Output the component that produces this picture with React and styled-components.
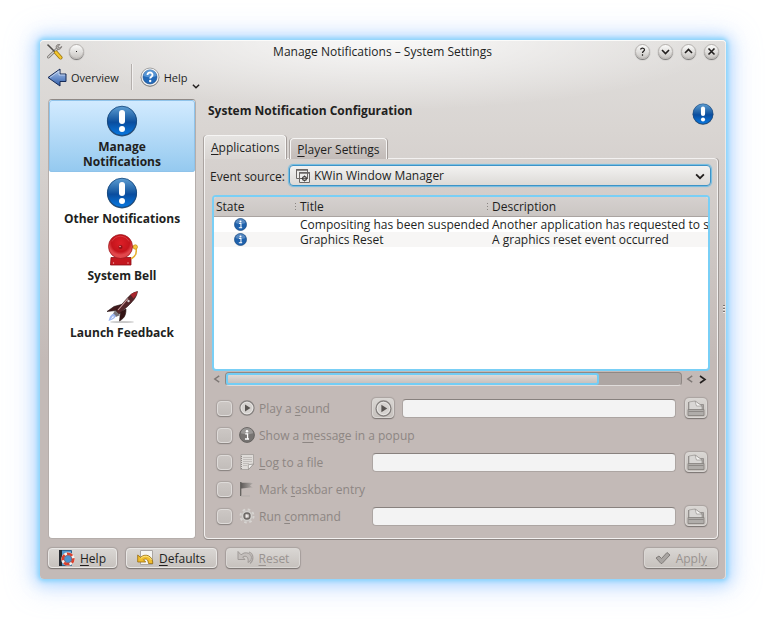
import React from 'react';
import styled, { createGlobalStyle, css } from 'styled-components';

const GlobalStyle = createGlobalStyle`
  * {
    box-sizing: border-box;
  }
  body {
    margin: 0;
    background: #fff;
    color: #221f1e;
    font: 12px/15px "Open Sans", "Noto Sans", sans-serif;
  }
  button, input, select {
    font: inherit;
    color: inherit;
  }
  svg {
    display: block;
    flex: none;
  }
`;

const Desktop = styled.div`
  display: flex;
  min-height: 100vh;
  padding: 40px;
`;

const Window = styled.div`
  position: relative;
  flex: 1;
  min-width: 0;
  display: flex;
  flex-direction: column;
  padding: 0 8px 11px;
  border-radius: 4px;
  background:
    radial-gradient(ellipse 340px 70px at 50% 0, rgba(255, 255, 255, 0.8), transparent),
    linear-gradient(#e0dedc, #d9d5d2 90px, #c3bab7 320px);
  box-shadow:
    inset 0 1px 0 #fbfbfa,
    inset -1px 0 0 rgba(255, 255, 255, 0.5),
    0 0 4px 2px #86d3fb,
    0 1px 14px 5px rgba(140, 200, 255, 0.55),
    0 2px 28px 8px rgba(160, 195, 255, 0.35);
`;

const TitleBar = styled.header`
  display: flex;
  align-items: center;
  justify-content: space-between;
  height: 22px;
  margin: 0 -1px 0 -2px;
`;

const TitleGroup = styled.div`
  display: flex;
  align-items: center;
  gap: ${({ $gap }) => $gap}px;
  width: 86px;
  justify-content: ${({ $end }) => ($end ? 'flex-end' : 'flex-start')};
`;

const WindowTitle = styled.h1`
  margin: 0;
  font-size: 12px;
  font-weight: 400;
  white-space: nowrap;
`;

const RoundButton = styled.button`
  display: grid;
  place-items: center;
  width: 15px;
  height: 15px;
  padding: 0;
  border: 1px solid #b5b1ae;
  border-radius: 50%;
  background: linear-gradient(#fbfbfa, #c9c6c3);
  box-shadow: 0 1px 1px rgba(0, 0, 0, 0.5);
`;

const Toolbar = styled.nav`
  display: flex;
  align-items: center;
  height: 30px;
  margin-left: -1px;
  font-size: 11px;
`;

const ToolButton = styled.button`
  display: flex;
  align-items: center;
  gap: 4px;
  height: 26px;
  padding: 0;
  border: 0;
  background: none;
`;

const ToolDivider = styled.span`
  width: 2px;
  height: 26px;
  margin: 0 7px 0 12px;
  background: linear-gradient(90deg, #b4afac 50%, #f2f0ef 50%);
`;

const MenuArrow = styled.span`
  align-self: flex-end;
`;

const Body = styled.div`
  flex: 1;
  display: flex;
  gap: 8px;
  margin-top: 7px;
  min-height: 0;
`;

const Sidebar = styled.nav`
  width: 148px;
  flex: none;
  border: 1px solid #b5aeab;
  border-top-color: #8f8986;
  border-radius: 4px;
  background: #fff;
  overflow: hidden;
`;

const SidebarItem = styled.a`
  display: flex;
  flex-direction: column;
  align-items: center;
  gap: 2px;
  padding: 5px 20px 3px;
  border-radius: 3px;
  color: inherit;
  font-weight: 700;
  text-align: center;
  text-decoration: none;
  ${({ $wide }) => $wide && css`
    padding-left: 0;
    padding-right: 0;
  `}
  ${({ $active }) => $active && css`
    background: linear-gradient(#d3ebff, #94c9ef);
    box-shadow: inset 0 0 0 1px #8fc3ea;
  `}
`;

const Main = styled.main`
  flex: 1;
  min-width: 0;
  display: flex;
  flex-direction: column;
`;

const PageHeader = styled.div`
  display: flex;
  align-items: center;
  justify-content: space-between;
  height: 29px;
  padding: 0 4px;
`;

const PageTitle = styled.h2`
  margin: 0 0 6px;
  font-size: 12px;
`;

const Tabs = styled.div`
  display: flex;
  align-items: flex-end;
  gap: 4px;
  margin: 7px 0 -1px;
`;

const Tab = styled.button`
  position: relative;
  height: ${({ $active }) => ($active ? 24 : 21)}px;
  padding: 0 6px;
  border: 1px solid #f6f5f4;
  border-bottom: 0;
  border-radius: 4px 4px 0 0;
  background: ${({ $active }) => ($active ? 'linear-gradient(#e6e4e2, #d9d5d2)' : 'linear-gradient(#d2cdca, #c3bcb9)')};
  box-shadow: 1px 0 0 #a39c99, -1px 0 0 #aaa4a1;
`;

const Panel = styled.section`
  flex: 1;
  display: flex;
  flex-direction: column;
  padding: 6px 6px 11px 5px;
  border: 1px solid #f3f1f0;
  border-radius: 0 4px 4px 4px;
  box-shadow: 0 1px 0 #8f8885, 1px 0 0 #9f9895, -1px 0 0 #aaa3a0;
`;

const SourceRow = styled.div`
  display: flex;
  align-items: center;
  gap: 4px;
`;

const SelectFrame = styled.div`
  flex: 1;
  display: flex;
  align-items: center;
  gap: 3px;
  height: 21px;
  margin-bottom: 1px;
  padding: 0 5px;
  border: 1px solid #3d93c7;
  border-radius: 4px;
  background: linear-gradient(#f3f2f1, #dcdad7);
  box-shadow: 0 0 1px 1px #6fbce3;
`;

const Select = styled.select`
  flex: 1;
  appearance: none;
  padding: 0;
  border: 0;
  outline: 0;
  background: none;
`;

const TableFrame = styled.div`
  flex: 1;
  min-height: 175px;
  margin: 8px 1px 0 2px;
  border: 2px solid #79cff6;
  border-radius: 4px;
  background: #fff;
  overflow: hidden;
`;

const EventTable = styled.table`
  width: 100%;
  table-layout: fixed;
  border-collapse: collapse;
  th, td {
    height: 15px;
    padding: 0 0 0 5px;
    text-align: left;
    font-weight: 400;
    white-space: nowrap;
  }
  th {
    height: 19px;
    border-bottom: 1px solid #aaa4a1;
    background: linear-gradient(#d5d1cf, #cbc6c3);
  }
  th + th {
    background:
      repeating-linear-gradient(#8a8582 0 1px, transparent 1px 3px) 0 6px / 1px 8px no-repeat,
      linear-gradient(#d5d1cf, #cbc6c3);
  }
  th:first-child {
    padding-left: 2px;
  }
  td:first-child svg {
    margin: 0 auto 0 15px;
  }
  tbody tr:nth-child(even) {
    background: #f7f6f5;
  }
`;

const StateColumn = styled.col`
  width: 81px;
`;

const TitleColumn = styled.col`
  width: 192px;
`;

const ScrollBar = styled.div`
  display: flex;
  align-items: center;
  gap: 4px;
  margin: 1px 4px 0 3px;
`;

const ScrollArrow = styled.button`
  padding: 0;
  border: 0;
  background: none;
  color: #24201f;
  &:disabled {
    color: #7d7774;
  }
`;

const ScrollTrack = styled.div`
  flex: 1;
  height: 14px;
  border: 1px solid #8f8885;
  border-bottom-color: #e0dcda;
  border-radius: 4px;
  background: #aea6a3;
`;

const ScrollThumb = styled.div`
  width: 82%;
  height: 12px;
  border: 2px solid #72cdf5;
  border-radius: 3px;
  background: linear-gradient(#dedad8, #c6c1be);
`;

const Actions = styled.div`
  display: flex;
  flex-direction: column;
  gap: 5px;
  margin: 11px 4px 0 7px;
`;

const ActionRow = styled.div`
  display: flex;
  align-items: center;
  gap: 8px;
  height: 22px;
`;

const ActionLabel = styled.label`
  display: flex;
  align-items: center;
  gap: 4px;
  min-width: 147px;
  color: #8d8683;
  white-space: nowrap;
`;

const CheckBox = styled.input`
  appearance: none;
  flex: none;
  width: 15px;
  height: 15px;
  margin: 0 3px 0 0;
  border: 1px solid #dedbd9;
  border-radius: 4px;
  background: linear-gradient(#ccc7c4, #c2bdba);
  box-shadow: 0 1px 1px #8a8481, 0 0 1px 1px #aaa3a0;
`;

const TextField = styled.input`
  flex: 1;
  min-width: 0;
  height: 19px;
  padding: 0 4px;
  border: 1px solid #aca5a2;
  border-top-color: #88817e;
  border-radius: 4px;
  background: #f3f3f3;
`;

const Button = styled.button`
  display: flex;
  align-items: center;
  justify-content: center;
  gap: 5px;
  height: 20px;
  padding: 0 10px;
  border: 1px solid #e9e7e5;
  border-radius: 4px;
  background: linear-gradient(#d9d6d3, #c7c2be);
  box-shadow: 0 1px 1px #7c7673, 0 0 1px 1px #aaa3a0;
  &:disabled {
    color: #999390;
    border-color: #dad7d4;
  }
`;

const IconButton = styled(Button)`
  flex: none;
  width: 22px;
  padding: 0;
`;

const BrowseButton = styled(IconButton)`
  margin-left: 1px;
`;

const Footer = styled.footer`
  display: flex;
  gap: 9px;
  margin-top: 9px;
`;

const Spacer = styled.div`
  flex: 1;
`;

const Grip = styled.span`
  position: absolute;
  top: 50%;
  right: 1px;
  width: 2px;
  height: 9px;
  margin-top: -5px;
  background: repeating-linear-gradient(#7b7471 0 1px, #efeceb 1px 2px, transparent 2px 3px);
`;

const Key = styled.span`
  text-decoration: underline;
  text-decoration-thickness: 1px;
  text-underline-offset: 2px;
`;

const Chevron = ({ d, size = 9, width = 1.6 }) => (
  <svg width={size} height={size} viewBox="0 0 9 9" fill="none" stroke="currentColor" strokeWidth={width}>
    <path d={d} />
  </svg>
);

const DOWN = 'M1 3l3.5 3.5L8 3';
const UP = 'M1 6l3.5-3.5L8 6';
const LEFT = 'M7 1L2 4.5L7 8';
const RIGHT = 'M2 1l5 3.5L2 8';

const ToolsIcon = () => (
  <svg width="17" height="17" viewBox="0 0 17 17" fill="none" strokeLinecap="round">
    <path d="M2.500 14L11.500 5.500" stroke="#77736f" strokeWidth="2.800" />
    <path d="M2.500 14L11.500 5.500" stroke="#d4d2cf" strokeWidth="1.200" />
    <path d="M13.500 1.500c-3-.5-4 2-2.800 4 1.500 1.600 4.500.9 5-2l-2 1.400-1.600-1z" fill="#bdbab6" stroke="#77736f" strokeWidth=".9" />
    <path d="M2 2l8 8" stroke="#504d4a" strokeWidth="1.600" />
    <path d="M10 9.500l4.500 5" stroke="#957111" strokeWidth="4" />
    <path d="M10 9.500l4.500 5" stroke="#f3c52c" strokeWidth="2.600" />
  </svg>
);

const BackIcon = () => (
  <svg width="20" height="19" viewBox="0 0 20 19">
    <defs>
      <linearGradient id="back" x2="0" y2="1">
        <stop stopColor="#b3caeb" />
        <stop offset=".5" stopColor="#6d92cd" />
        <stop offset="1" stopColor="#2f5ba5" />
      </linearGradient>
    </defs>
    <path d="M1 9.500L13 1v5h6v7.500h-6V18z" fill="url(#back)" stroke="#172b57" strokeLinejoin="round" />
    <path d="M3 9.500L12 3v4h6" fill="none" stroke="#d3e0f5" strokeWidth=".7" />
  </svg>
);

const HelpIcon = () => (
  <svg width="20" height="20" viewBox="0 0 20 20">
    <circle cx="10" cy="10.500" r="9.200" fill="#777" />
    <circle cx="10" cy="10" r="9" fill="#f5f5f5" stroke="#8b8b8b" strokeWidth=".7" />
    <circle cx="10" cy="10" r="7" fill="#2269b8" stroke="#134684" strokeWidth=".6" />
    <path d="M3.500 9a6.500 6.500 0 0 1 13 0q-6.500 2.500-13 0" fill="#6ba6e0" opacity=".7" />
    <path d="M7.500 8c0-3.500 5.200-3.300 5 0c0 1.700-2.300 1.700-2.300 3.600" fill="none" stroke="#fff" strokeWidth="1.900" />
    <circle cx="10.200" cy="14" r="1.200" fill="#fff" />
  </svg>
);

const AlertIcon = ({ size = 32, id }) => (
  <svg width={size} height={size} viewBox="0 0 32 32">
    <defs>
      <linearGradient id={id} x2="0" y2="1">
        <stop stopColor="#5e9ed2" />
        <stop offset=".45" stopColor="#1b5da5" />
        <stop offset=".55" stopColor="#0a4d9e" />
        <stop offset="1" stopColor="#0879e2" />
      </linearGradient>
    </defs>
    <circle cx="16" cy="16.500" r="15" fill="#314d6b" />
    <circle cx="16" cy="15.800" r="14.600" fill={`url(#${id})`} stroke="#174a82" strokeWidth=".8" />
    <rect x="13" y="5" width="6" height="14" rx="3" fill="#fff" />
    <circle cx="16" cy="24" r="3" fill="#fff" />
  </svg>
);

const BellIcon = () => (
  <svg width="32" height="32" viewBox="0 0 32 32">
    <defs>
      <radialGradient id="bell" cy=".35">
        <stop stopColor="#dc1f27" />
        <stop offset=".75" stopColor="#c5141c" />
        <stop offset="1" stopColor="#e1474b" />
      </radialGradient>
    </defs>
    <path d="M5 23.500h20v7.500H4.500z" fill="#c4171f" stroke="#8a0e14" strokeWidth=".8" />
    <path d="M30 14c1 5-1 9-5 11" fill="none" stroke="#e6b02d" strokeWidth="1.500" />
    <path d="M24 12.500l5 .5" stroke="#e6b02d" strokeWidth="2" />
    <circle cx="29.300" cy="13" r="2.200" fill="#f5c842" stroke="#c28b18" strokeWidth=".7" />
    <circle cx="14.500" cy="12.500" r="12" fill="url(#bell)" stroke="#951117" strokeWidth=".7" />
    <path d="M6 7.500c3.500-7 13.500-7 17 0" fill="none" stroke="#f28a8a" strokeWidth="1" opacity=".3" />
    <circle cx="14.500" cy="13" r="2" fill="#8f1319" />
    <circle cx="14" cy="12.500" r=".8" fill="#f5a3a3" />
    <circle cx="7.500" cy="29" r=".7" fill="#f3b0b0" />
    <circle cx="22" cy="29" r=".7" fill="#f3b0b0" />
  </svg>
);

const RocketIcon = () => (
  <svg width="32" height="32" viewBox="0 0 32 32">
    <ellipse cx="16" cy="31" rx="12" ry="1" fill="#c8c8c8" />
    <path d="M17 13L8 15.500l-7 5 9-1 5-2z" fill="#42191b" stroke="#1d0b0c" strokeWidth=".6" />
    <path d="M20 18c0 5-1 9-6.500 12l1-9z" fill="#351415" stroke="#1d0b0c" strokeWidth=".6" />
    <path d="M31.500 .5c-5 1-8 4-11 7.500L10 20l3 3 9-8c4-4 8.500-8 9.500-14.500z" fill="#54262a" stroke="#281011" strokeWidth=".6" />
    <path d="M31.500 .5c-3 .5-5 1.500-7 3l3 4c2-2 3.500-4 4-7z" fill="#a8262d" />
    <path d="M22 7.500L12 19" stroke="#d3a4a4" strokeWidth="1.100" />
    <circle cx="22.500" cy="10" r="1.200" fill="#d9d0d0" />
    <path d="M9 20l4.500 4-3.500 1.500-3-2z" fill="#77747c" stroke="#4d4d55" strokeWidth=".5" />
    <path d="M7.500 22.500c-4 2-4 5-5 7.500 3-1 6-2 7.500-5z" fill="#9db6f0" />
    <path d="M7 25l-2.500 3.500 3.500-2.500z" fill="#fff" />
  </svg>
);

const InfoIcon = ({ gray, size = 13 }) => (
  <svg width={size} height={size} viewBox="0 0 14 14">
    <circle cx="7" cy="7" r="6.500" fill={gray ? '#777472' : '#1e61ac'} stroke={gray ? '#5c5957' : '#16457c'} strokeWidth=".7" />
    <path d="M1.500 5.500a5.600 5.600 0 0 1 11 0q-5.500 2-11 0" fill="#fff" opacity=".25" />
    <circle cx="7" cy="3.700" r="1.100" fill="#fff" />
    <path d="M5.500 6h2v4.500M5.200 10.500h3.600" fill="none" stroke="#fff" strokeWidth="1.100" />
  </svg>
);

const WindowsIcon = () => (
  <svg width="16" height="16" viewBox="0 0 16 16" fill="#eeedeb" stroke="#6b6765">
    <path d="M1.500 1.500h11v9h-11zM4.500 4.500h10v10h-10z" />
    <path d="M1 2h12M4 5h11" strokeWidth="1.600" />
    <circle cx="9.500" cy="10.500" r="1.900" fill="none" stroke="#3f3b39" strokeWidth="1.200" />
    <path d="M9.500 7.500v1.500M9.500 12v1.500M6.500 10.500H8M11 10.500h1.500" stroke="#3f3b39" strokeWidth=".9" />
  </svg>
);

const PlayIcon = ({ size = 16 }) => (
  <svg width={size} height={size} viewBox="0 0 16 16">
    <circle cx="8" cy="8" r="7" fill="#d5d2cf" stroke="#85817f" strokeWidth="1.300" />
    <circle cx="8" cy="8" r="5.900" fill="none" stroke="#efedeb" strokeWidth=".7" />
    <path d="M6 4.500v7L11.500 8z" fill="#595552" />
  </svg>
);

const NoteIcon = () => (
  <svg width="16" height="16" viewBox="0 0 16 16">
    <path d="M2 .5h12.500V10L9.500 15.500H1.500z" fill="#dedbd8" stroke="#a19c99" strokeWidth=".8" />
    <path d="M4 3.500h9M4 5.500h9M4 7.500h9M4 9.500h6M4 11.500h4" stroke="#b5b0ad" strokeWidth=".7" />
    <path d="M2.500 2v13" stroke="#8e8986" strokeDasharray="1 1" />
    <path d="M14.500 10L9.500 15.500l-.3-4.700z" fill="#f5f4f3" stroke="#8b8683" strokeWidth=".7" />
  </svg>
);

const FlagIcon = () => (
  <svg width="16" height="16" viewBox="0 0 16 16">
    <defs>
      <linearGradient id="flag">
        <stop stopColor="#5f5b59" />
        <stop offset="1" stopColor="#b5afac" />
      </linearGradient>
    </defs>
    <path d="M2 1.500c4 1 6-.5 12 .8l-3 2.200 3 2.200c-5-.5-8 1-12 .8z" fill="url(#flag)" />
    <path d="M1.700 1v14" stroke="#63605d" strokeWidth="1.300" />
    <path d="M2 15h9" stroke="#b3adaa" />
  </svg>
);

const GearIcon = () => (
  <svg width="16" height="16" viewBox="0 0 16 16">
    <circle cx="8" cy="8" r="6.300" fill="none" stroke="#d7d4d1" strokeWidth="2.400" strokeDasharray="2.470 2.470" />
    <circle cx="8" cy="8" r="5.500" fill="#d3d0cd" stroke="#bbb6b3" strokeWidth=".4" />
    <circle cx="8" cy="8" r="3" fill="#b8b2af" stroke="#6b6764" strokeWidth="1.400" />
    <path d="M7 6.300v3.400L9.800 8z" fill="#efedeb" />
  </svg>
);

const FolderIcon = () => (
  <svg width="18" height="17" viewBox="0 0 18 17">
    <path d="M1.500 2v13h15V4.500H13" fill="#aaa6a3" stroke="#969290" />
    <path d="M2 10V2l6-1 7 5v4z" fill="#d9d7d5" stroke="#8d8986" strokeWidth=".6" />
    <path d="M8 1l1.500 5H15z" fill="#f5f4f3" stroke="#8d8986" strokeWidth=".6" />
    <path d="M1 9.500h16V15.500H1z" fill="#b0adaa" stroke="#85817e" strokeWidth=".8" />
    <path d="M1.500 11.500h15" stroke="#85817e" strokeWidth=".8" />
  </svg>
);

const HandbookIcon = () => (
  <svg width="16" height="16" viewBox="0 0 16 16">
    <path d="M.5.500h12v15H.5z" fill="#5599ce" stroke="#2e618c" />
    <path d="M0 0h3v16H0z" fill="#252a31" />
    <circle cx="9" cy="9" r="5.300" fill="none" stroke="#f5f2f0" strokeWidth="3" />
    <circle cx="9" cy="9" r="5.300" fill="none" stroke="#d8422f" strokeWidth="2.600" strokeDasharray="5.820 2.500" strokeDashoffset="1.700" />
    <circle cx="9" cy="9" r="3.800" fill="#4b92cf" stroke="#a93b2d" strokeWidth=".5" />
  </svg>
);

const DefaultsIcon = () => (
  <svg width="17" height="16" viewBox="0 0 17 16">
    <path d="M3.500.500h12v14h-12z" fill="#f5f5f3" stroke="#aaa6a3" />
    <path d="M.7 5v7h8L6.500 9.700c2.500-1.500 4.500-.6 5 3.800h4.300C16 6.500 9 2.500 3.500 7.300z" fill="#f0bd2d" stroke="#94690f" strokeWidth=".8" strokeLinejoin="round" />
    <path d="M3.800 8.300C8 4.500 13 6.500 14.500 10" fill="none" stroke="#ffec91" strokeWidth=".9" />
  </svg>
);

const ResetIcon = () => (
  <svg width="17" height="16" viewBox="0 0 17 16">
    <path d="M1 1.500v8h7L5.700 7C9 5 12 7 11 12.500c6-3 4-11-4-9.500L4 4.800z" fill="#c4bfbc" stroke="#a09b98" strokeLinejoin="round" />
    <path d="M12 2c5 2 5 8 1 11.500" fill="none" stroke="#a5a09d" strokeWidth="1.200" />
  </svg>
);

const CheckIcon = () => (
  <svg width="16" height="14" viewBox="0 0 16 14">
    <path d="M1 7l3-2 2.500 2.500L12 1.500 15 4 7 12.500H6z" fill="#a9a5a2" stroke="#807c79" strokeLinejoin="round" />
  </svg>
);

const sidebarItems = [
  { label: 'Manage Notifications', icon: <AlertIcon id="alert-manage" />, active: true },
  { label: 'Other Notifications', icon: <AlertIcon id="alert-other" /> },
  { label: 'System Bell', icon: <BellIcon /> },
  { label: 'Launch Feedback', icon: <RocketIcon /> },
];

const events = [
  ['Compositing has been suspended', 'Another application has requested to suspend'],
  ['Graphics Reset', 'A graphics reset event occurred'],
];

const actions = [
  { id: 'sound', icon: <PlayIcon />, text: ['Play a ', 's', 'ound'], field: true, player: true },
  { id: 'popup', icon: <InfoIcon gray size={16} />, text: ['Show a ', 'm', 'essage in a popup'] },
  { id: 'log', icon: <NoteIcon />, text: ['', 'L', 'og to a file'], field: true },
  { id: 'taskbar', icon: <FlagIcon />, text: ['Mark ', 't', 'askbar entry'] },
  { id: 'command', icon: <GearIcon />, text: ['Run ', 'c', 'ommand'], field: true },
];

const App = () => {
  return (
    <Desktop>
      <GlobalStyle />
      <Window>
        <TitleBar>
          <TitleGroup $gap={6}>
            <ToolsIcon />
            <RoundButton aria-label="On all desktops">
              <Chevron d="M4 4.500h1" width={1} />
            </RoundButton>
          </TitleGroup>
          <WindowTitle>Manage Notifications – System Settings</WindowTitle>
          <TitleGroup $gap={8} $end>
            <RoundButton aria-label="What's this">
              <Chevron d="M2.500 2.500c.5-2 4-2 4 .3c0 1.500-2 1.500-2 3.200M4.500 7.300v1.400" width={1.2} />
            </RoundButton>
            <RoundButton aria-label="Minimize"><Chevron d={DOWN} /></RoundButton>
            <RoundButton aria-label="Maximize"><Chevron d={UP} /></RoundButton>
            <RoundButton aria-label="Close"><Chevron d="M1.500 1.500l6 6M7.500 1.500l-6 6" /></RoundButton>
          </TitleGroup>
        </TitleBar>

        <Toolbar>
          <ToolButton>
            <BackIcon />
            Overview
          </ToolButton>
          <ToolDivider />
          <ToolButton>
            <HelpIcon />
            Help
            <MenuArrow><Chevron d={DOWN} size={8} /></MenuArrow>
          </ToolButton>
        </Toolbar>

        <Body>
          <Sidebar>
            {sidebarItems.map(({ label, icon, active }) => (
              <SidebarItem key={label} href="#" $active={active} $wide={!active}>
                {icon}
                {label}
              </SidebarItem>
            ))}
          </Sidebar>

          <Main>
            <PageHeader>
              <PageTitle>System Notification Configuration</PageTitle>
              <AlertIcon id="alert-page" size={22} />
            </PageHeader>
            <Tabs role="tablist">
              <Tab role="tab" aria-selected="true" $active><Key>A</Key>pplications</Tab>
              <Tab role="tab" aria-selected="false"><Key>P</Key>layer Settings</Tab>
            </Tabs>
            <Panel>
              <SourceRow>
                <label htmlFor="source">Event source:</label>
                <SelectFrame>
                  <WindowsIcon />
                  <Select id="source" defaultValue="kwin">
                    <option value="kwin">KWin Window Manager</option>
                  </Select>
                  <Chevron d={DOWN} size={10} />
                </SelectFrame>
              </SourceRow>

              <TableFrame>
                <EventTable>
                  <colgroup>
                    <StateColumn />
                    <TitleColumn />
                    <col />
                  </colgroup>
                  <thead>
                    <tr>
                      <th>State</th>
                      <th>Title</th>
                      <th>Description</th>
                    </tr>
                  </thead>
                  <tbody>
                    {events.map(([title, description]) => (
                      <tr key={title}>
                        <td><InfoIcon /></td>
                        <td>{title}</td>
                        <td>{description}</td>
                      </tr>
                    ))}
                  </tbody>
                </EventTable>
              </TableFrame>

              <ScrollBar>
                <ScrollArrow aria-label="Scroll left" disabled><Chevron d={LEFT} size={8} /></ScrollArrow>
                <ScrollTrack><ScrollThumb /></ScrollTrack>
                <ScrollArrow aria-label="Scroll back" disabled><Chevron d={LEFT} size={8} /></ScrollArrow>
                <ScrollArrow aria-label="Scroll right"><Chevron d={RIGHT} size={9} /></ScrollArrow>
              </ScrollBar>

              <Actions>
                {actions.map(({ id, icon, text, field, player }) => (
                  <ActionRow key={id}>
                    <ActionLabel>
                      <CheckBox type="checkbox" disabled />
                      {icon}
                      <span>{text[0]}<Key>{text[1]}</Key>{text[2]}</span>
                    </ActionLabel>
                    {player && <IconButton aria-label="Play" disabled><PlayIcon size={17} /></IconButton>}
                    {field && (
                      <>
                        <TextField aria-label={text.join('')} disabled />
                        <BrowseButton aria-label="Open file dialog" disabled><FolderIcon /></BrowseButton>
                      </>
                    )}
                  </ActionRow>
                ))}
              </Actions>
            </Panel>
          </Main>
        </Body>

        <Footer>
          <Button><HandbookIcon /><span><Key>H</Key>elp</span></Button>
          <Button><DefaultsIcon /><span><Key>D</Key>efaults</span></Button>
          <Button disabled><ResetIcon /><span><Key>R</Key>eset</span></Button>
          <Spacer />
          <Button disabled><CheckIcon /><span>Appl<Key>y</Key></span></Button>
        </Footer>
        <Grip />
      </Window>
    </Desktop>
  );
};

export default App;
